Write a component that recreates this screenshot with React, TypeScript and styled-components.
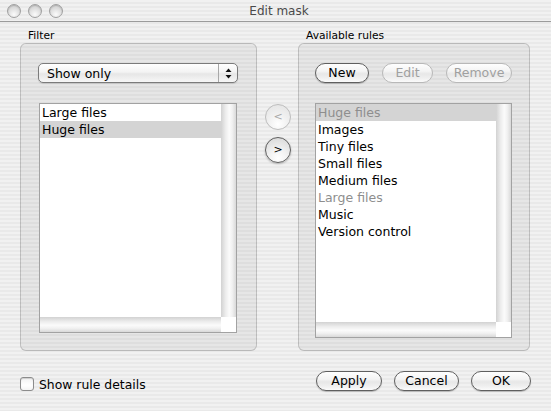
import React from "react";
import styled, { createGlobalStyle, css } from "styled-components";

const GlobalStyle = createGlobalStyle`
  html, body {
    margin: 0;
    padding: 0;
    background: #ececec;
  }
  * {
    box-sizing: border-box;
  }
`;

const pinstripe = css`
  background: repeating-linear-gradient(
    to bottom,
    #f1f1f1 0px,
    #f1f1f1 2px,
    #e9e9e9 2px,
    #e9e9e9 4px
  );
`;

const Window = styled.div`
  width: 551px;
  height: 411px;
  display: flex;
  flex-direction: column;
  font-family: "DejaVu Sans", "Liberation Sans", sans-serif;
  color: #000;
  ${pinstripe};
`;

const TitleBar = styled.div`
  height: 22px;
  display: grid;
  grid-template-columns: 1fr auto 1fr;
  align-items: center;
  border-bottom: 1px solid #9c9c9c;
  padding: 0 0 0 7px;
`;

const Lights = styled.div`
  display: flex;
  gap: 7px;
`;

const Light = styled.span`
  width: 14px;
  height: 14px;
  border-radius: 50%;
  border: 1px solid #a0a0a0;
  background: radial-gradient(
    circle at 50% 78%,
    #fbfbfb 0%,
    #e2e2e2 45%,
    #c6c6c6 100%
  );
  box-shadow: inset 0 1px 1px rgba(0, 0, 0, 0.15);
`;

const Title = styled.div`
  font-size: 12px;
  color: #4a4a4a;
`;

const Body = styled.div`
  display: grid;
  grid-template-columns: 237px 41px 232px;
  padding: 7px 21px 0 20px;
`;

const Column = styled.div`
  display: flex;
  flex-direction: column;
`;

const GroupLabel = styled.div`
  font-size: 10.7px;
  line-height: 14px;
  padding-left: 8px;
`;

const GroupBox = styled.div<{ $pad: string }>`
  height: 308px;
  display: flex;
  flex-direction: column;
  padding: ${(p) => p.$pad};
  border: 1px solid rgba(0, 0, 0, 0.17);
  border-radius: 6px;
  background: rgba(0, 0, 0, 0.045);
`;

const Popup = styled.div`
  width: 200px;
  height: 20px;
  display: flex;
  border: 1px solid #7b7b7b;
  border-radius: 5px;
  background: linear-gradient(
    to bottom,
    #ffffff 0%,
    #f3f3f3 45%,
    #e6e6e6 55%,
    #f7f7f7 100%
  );
  box-shadow: 0 1px 1px rgba(0, 0, 0, 0.12);
  font-size: 12.5px;
`;

const PopupText = styled.div`
  flex: 1;
  line-height: 19px;
  padding-left: 8px;
`;

const PopupArrows = styled.div`
  width: 19px;
  border-left: 1px solid #a8a8a8;
  display: flex;
  align-items: center;
  justify-content: center;
`;

const List = styled.div<{ $w: number; $offset: number }>`
  width: ${(p) => p.$w}px;
  margin-top: 20px;
  margin-left: ${(p) => p.$offset}px;
  flex: 1;
  display: grid;
  grid-template-columns: 1fr 15px;
  grid-template-rows: 1fr 15px;
  border: 1px solid #a2a2a2;
  background: #fff;
`;

const Rows = styled.div`
  overflow: hidden;
`;

const Row = styled.div<{ $selected?: boolean; $dim?: boolean }>`
  height: 17px;
  line-height: 16px;
  padding: 1px 0 0 2px;
  font-size: 12.5px;
  white-space: nowrap;
  color: ${(p) => (p.$dim ? "#8e8e8e" : "#000")};
  background: ${(p) => (p.$selected ? "#d4d4d4" : "transparent")};
`;

const VScroll = styled.div`
  background: linear-gradient(
    to right,
    #d2d2d2 0%,
    #ececec 30%,
    #fbfbfb 55%,
    #f1f1f1 75%,
    #d9d9d9 100%
  );
`;

const HScroll = styled.div`
  background: linear-gradient(
    to bottom,
    #d2d2d2 0%,
    #ececec 30%,
    #fbfbfb 55%,
    #f1f1f1 75%,
    #d9d9d9 100%
  );
`;

const Corner = styled.div`
  background: #fff;
`;

const MiddleColumn = styled.div`
  display: flex;
  flex-direction: column;
  align-items: center;
  padding-top: 75px;
  gap: 7px;
`;

const RoundButton = styled.button<{ $disabled?: boolean }>`
  width: 26px;
  height: 26px;
  padding: 0 0 2px 1px;
  border-radius: 50%;
  font-family: "DejaVu Sans", sans-serif;
  font-size: 11px;
  line-height: 1;
  border: 1px solid ${(p) => (p.$disabled ? "#bdbdbd" : "#5e5e5e")};
  color: ${(p) => (p.$disabled ? "#a8a8a8" : "#000")};
  background: ${(p) =>
    p.$disabled
      ? "radial-gradient(circle at 50% 80%, #ffffff 0%, #f0f0f0 45%, #e2e2e2 100%)"
      : "radial-gradient(circle at 50% 85%, #ffffff 0%, #f1f1f1 40%, #d5d5d5 100%)"};
  box-shadow: ${(p) =>
    p.$disabled ? "none" : "0 1px 2px rgba(0, 0, 0, 0.25)"};
`;

const ButtonRow = styled.div`
  display: flex;
  gap: 13px;
`;

const PushButton = styled.button<{ $w: number; $disabled?: boolean }>`
  width: ${(p) => p.$w}px;
  height: 20px;
  padding: 0;
  border-radius: 10px;
  font-family: "DejaVu Sans", sans-serif;
  font-size: 12.5px;
  line-height: 18px;
  border: 1px solid ${(p) => (p.$disabled ? "#b8b8b8" : "#5f5f5f")};
  color: ${(p) => (p.$disabled ? "#a0a0a0" : "#000")};
  background: linear-gradient(
    to bottom,
    #fefefe 0%,
    #f4f4f4 40%,
    #e7e7e7 55%,
    #f0f0f0 80%,
    #fbfbfb 100%
  );
  box-shadow: ${(p) =>
    p.$disabled ? "none" : "0 1px 1px rgba(0, 0, 0, 0.22)"};
`;

const Footer = styled.div`
  margin-top: 20px;
  height: 20px;
  display: flex;
  align-items: center;
  justify-content: space-between;
  padding: 0 20px;
`;

const CheckLabel = styled.label`
  display: flex;
  align-items: center;
  gap: 5px;
  font-size: 12.4px;
  margin-top: 6px;
`;

const CheckBox = styled.span`
  width: 14px;
  height: 14px;
  border-radius: 3px;
  border: 1px solid #8c8c8c;
  background: linear-gradient(to bottom, #f2f2f2, #ffffff 60%, #f4f4f4);
  box-shadow: inset 0 1px 1px rgba(0, 0, 0, 0.15);
`;

const FooterButtons = styled.div`
  display: flex;
  gap: 12px;
`;

const StepperIcon = () => (
  <svg width="7" height="11" viewBox="0 0 7 11">
    <path d="M3.5 0.5 L6.5 4 L0.5 4 Z" fill="#111" />
    <path d="M3.5 10.5 L6.5 7 L0.5 7 Z" fill="#111" />
  </svg>
);

const ListView = ({
  width,
  offset,
  rows,
}: {
  width: number;
  offset: number;
  rows: { label: string; selected?: boolean; dim?: boolean }[];
}) => (
  <List $w={width} $offset={offset}>
    <Rows>
      {rows.map((r, i) => (
        <Row key={i} $selected={r.selected} $dim={r.dim}>
          {r.label}
        </Row>
      ))}
    </Rows>
    <VScroll />
    <HScroll />
    <Corner />
  </List>
);

const filterRows = [
  { label: "Large files" },
  { label: "Huge files", selected: true },
];

const ruleRows = [
  { label: "Huge files", selected: true, dim: true },
  { label: "Images" },
  { label: "Tiny files" },
  { label: "Small files" },
  { label: "Medium files" },
  { label: "Large files", dim: true },
  { label: "Music" },
  { label: "Version control" },
];

export default function App() {
  return (
    <>
      <GlobalStyle />
      <Window>
        <TitleBar>
          <Lights>
            <Light />
            <Light />
            <Light />
          </Lights>
          <Title>Edit mask</Title>
          <div />
        </TitleBar>
        <Body>
          <Column>
            <GroupLabel>Filter</GroupLabel>
            <GroupBox $pad="19px 18px 17px 17px">
              <Popup>
                <PopupText>Show only</PopupText>
                <PopupArrows>
                  <StepperIcon />
                </PopupArrows>
              </Popup>
              <ListView width={198} offset={1} rows={filterRows} />
            </GroupBox>
          </Column>
          <MiddleColumn>
            <RoundButton $disabled>&lt;</RoundButton>
            <RoundButton>&gt;</RoundButton>
          </MiddleColumn>
          <Column>
            <GroupLabel>Available rules</GroupLabel>
            <GroupBox $pad="19px 17px 12px 16px">
              <ButtonRow>
                <PushButton $w={54}>New</PushButton>
                <PushButton $w={51} $disabled>
                  Edit
                </PushButton>
                <PushButton $w={66} $disabled>
                  Remove
                </PushButton>
              </ButtonRow>
              <ListView width={197} offset={0} rows={ruleRows} />
            </GroupBox>
          </Column>
        </Body>
        <Footer>
          <CheckLabel>
            <CheckBox />
            Show rule details
          </CheckLabel>
          <FooterButtons>
            <PushButton $w={66}>Apply</PushButton>
            <PushButton $w={65}>Cancel</PushButton>
            <PushButton $w={60}>OK</PushButton>
          </FooterButtons>
        </Footer>
      </Window>
    </>
  );
}
